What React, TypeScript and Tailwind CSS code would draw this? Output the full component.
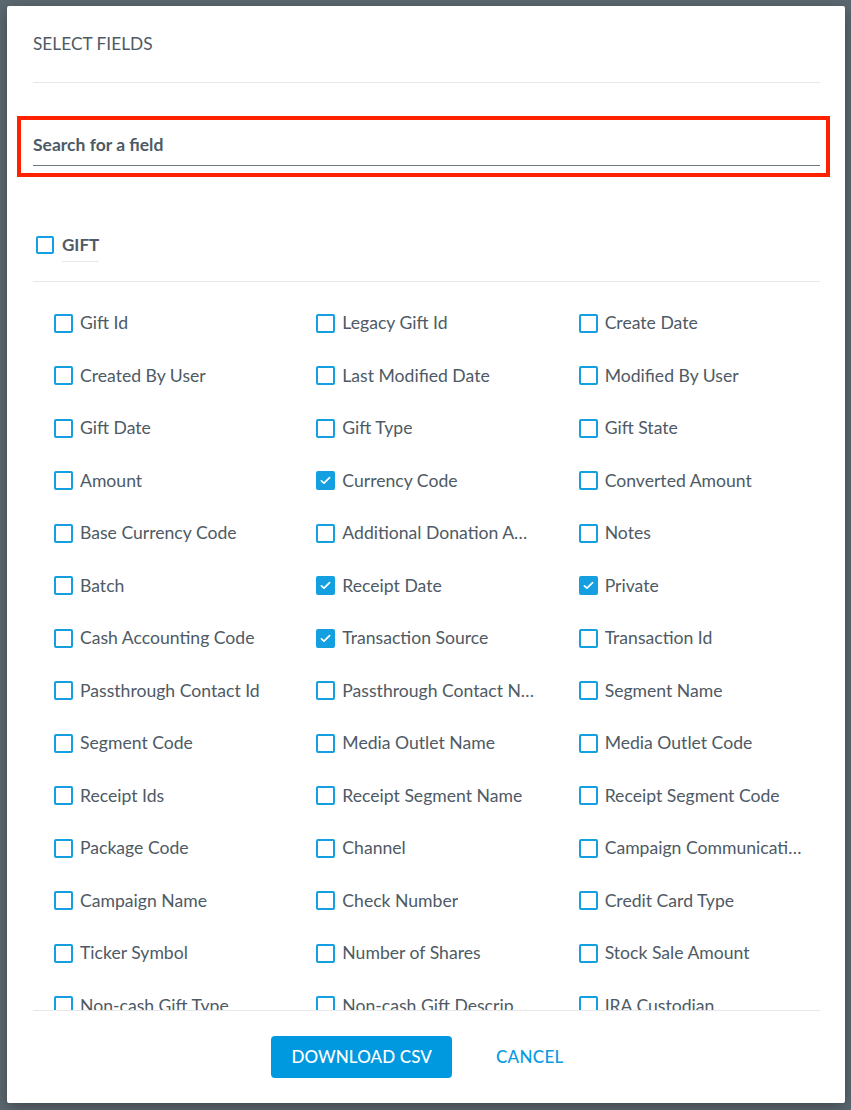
import React from "react";

type Field = { label: string; checked?: boolean };

const rows: Field[][] = [
  [{ label: "Gift Id" }, { label: "Legacy Gift Id" }, { label: "Create Date" }],
  [{ label: "Created By User" }, { label: "Last Modified Date" }, { label: "Modified By User" }],
  [{ label: "Gift Date" }, { label: "Gift Type" }, { label: "Gift State" }],
  [{ label: "Amount" }, { label: "Currency Code", checked: true }, { label: "Converted Amount" }],
  [{ label: "Base Currency Code" }, { label: "Additional Donation Amount" }, { label: "Notes" }],
  [{ label: "Batch" }, { label: "Receipt Date", checked: true }, { label: "Private", checked: true }],
  [{ label: "Cash Accounting Code" }, { label: "Transaction Source", checked: true }, { label: "Transaction Id" }],
  [{ label: "Passthrough Contact Id" }, { label: "Passthrough Contact Name" }, { label: "Segment Name" }],
  [{ label: "Segment Code" }, { label: "Media Outlet Name" }, { label: "Media Outlet Code" }],
  [{ label: "Receipt Ids" }, { label: "Receipt Segment Name" }, { label: "Receipt Segment Code" }],
  [{ label: "Package Code" }, { label: "Channel" }, { label: "Campaign Communication" }],
  [{ label: "Campaign Name" }, { label: "Check Number" }, { label: "Credit Card Type" }],
  [{ label: "Ticker Symbol" }, { label: "Number of Shares" }, { label: "Stock Sale Amount" }],
  [{ label: "Non-cash Gift Type" }, { label: "Non-cash Gift Description" }, { label: "IRA Custodian" }],
  [{ label: "IRA Account Number" }, { label: "Appeal" }, { label: "Fund" }],
];

function Box({ checked, size = 19 }: { checked?: boolean; size?: number }) {
  return (
    <span
      className={
        "flex shrink-0 items-center justify-center rounded-[2px] border-2 border-[#149fe0] " +
        (checked ? "bg-[#149fe0]" : "bg-white")
      }
      style={{ width: size, height: size }}
    >
      {checked && (
        <svg width="11" height="9" viewBox="0 0 11 9" fill="none">
          <path d="M1.4 4.8 L4 7.2 L9.6 1.6" stroke="white" strokeWidth="1.7" strokeLinecap="round" strokeLinejoin="round" />
        </svg>
      )}
    </span>
  );
}

export default function App() {
  return (
    <div
      className="min-h-screen w-full bg-[#5d6971] pl-[7px] pt-[6px] text-[#4e5a65]"
      style={{ fontFamily: "Lato, 'Open Sans', sans-serif" }}
    >
      <div className="flex h-[1097px] w-[838px] flex-col rounded-[2px] bg-white pl-[26px] pr-[25px] shadow-[0_4px_16px_rgba(0,0,0,0.35)]">
        <div className="h-[77px] shrink-0 border-b border-[#e6e8ea] pt-[26px]">
          <div className="text-[17.3px] leading-6">SELECT FIELDS</div>
        </div>

        <div className="mt-[33px] -ml-4 -mr-[10px] shrink-0 border-4 border-[#ff2200] pl-3 pr-[6px] pt-[13px] pb-[7px]">
          <div className="border-b border-[#6d7a82] pb-2 text-[17.5px] font-bold leading-6">Search for a field</div>
        </div>

        <div className="flex min-h-0 flex-1 flex-col overflow-hidden border-b border-[#e6e8ea]">
          <div className="mt-[56px] flex shrink-0 items-start border-b border-[#e6e8ea] pb-[19px] pl-[3px]">
            <span className="mt-[3px]">
              <Box size={18} />
            </span>
            <span className="ml-2 border-b border-[#e6e8ea] pb-1 text-[17px] font-bold leading-6">GIFT</span>
          </div>

          <div className="pt-[15px]">
            {rows.map((row, i) => (
              <div key={i} className="grid h-[52.5px] grid-cols-3">
                {row.map((f, j) => (
                  <div
                    key={f.label}
                    className={
                      "flex min-w-0 items-center pl-[21px] " + (j === 2 ? "pr-[14px]" : "pr-[22px]")
                    }
                  >
                    <Box checked={f.checked} />
                    <span className="ml-[7px] min-w-0 truncate text-[17.6px] leading-6">{f.label}</span>
                  </div>
                ))}
              </div>
            ))}
          </div>
        </div>

        <div className="flex h-[92px] shrink-0 items-center justify-center">
          <button className="h-[42px] rounded-[4px] bg-[#0099df] px-5 text-[17px] font-medium tracking-[0.1px] text-white">
            DOWNLOAD CSV
          </button>
          <button className="ml-[26px] h-[42px] px-[18px] text-[17px] font-medium tracking-[0.3px] text-[#0a9ae0]">
            CANCEL
          </button>
        </div>
      </div>
    </div>
  );
}
